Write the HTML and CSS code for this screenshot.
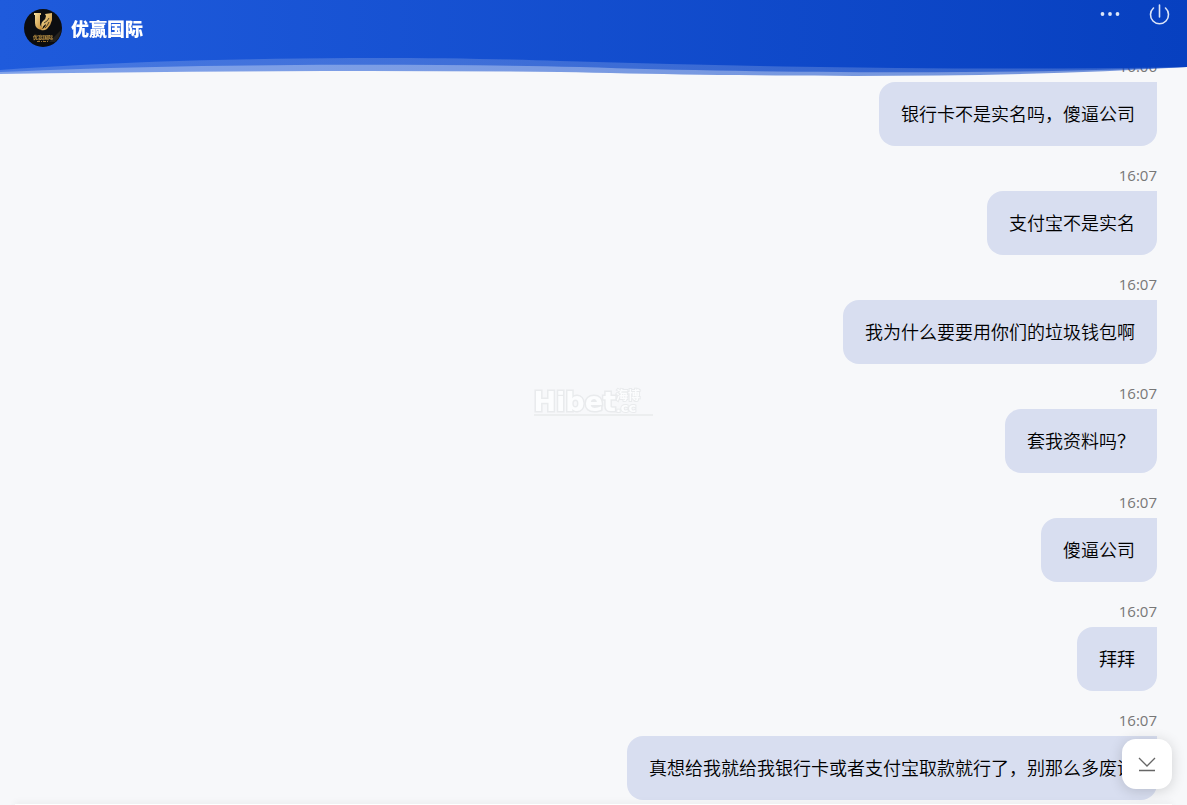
FILE: index.html
```
<!DOCTYPE html>
<html lang="zh-CN">
<head>
  <meta charset="utf-8">
  <title>优赢国际</title>
  <link rel="stylesheet" href="styles.css">
</head>
<body>
  <header class="header">
    <svg class="header-bg" viewBox="0 0 1187 80" preserveAspectRatio="none" aria-hidden="true">
      <defs>
        <linearGradient id="blue" x1="0" y1="0" x2="1" y2="0">
          <stop offset="0" stop-color="#1f5bdc"/>
          <stop offset="1" stop-color="#0740c0"/>
        </linearGradient>
      </defs>
      <path fill="url(#blue)" fill-opacity="0.55" d="M0 0V74C200 71 380 70 560 72C740 76 980 80 1187 67V0Z"/>
      <path fill="url(#blue)" fill-opacity="0.6" d="M0 0V72C180 64 400 63 580 67C760 73 1000 75 1187 67V0Z"/>
      <path fill="url(#blue)" d="M0 0V70C160 58 390 55 560 61C760 67 980 71 1187 67V0Z"/>
    </svg>
    <div class="brand">
      <svg class="logo" viewBox="0 0 38 38" aria-hidden="true">
        <defs>
          <linearGradient id="gold" x1="0" y1="0" x2="1" y2="1">
            <stop offset="0" stop-color="#f8e2a0"/>
            <stop offset="1" stop-color="#c1862f"/>
          </linearGradient>
        </defs>
        <circle cx="19" cy="19" r="19" fill="#0c0d10"/>
        <path fill="#24221f" d="M25 33L37 21A19 19 0 0 1 31 33Z"/>
        <path fill="url(#gold)" d="M10 4H17V6H16V14Q16 18 19 18L18 21Q11 20 11 14V6H10Z"/>
        <path fill="url(#gold)" d="M21 5L28 4V11Q27 16 23 20Q20 22 17 21Q22 18 22 15Q20 16 18 19Q16 15 19 12Q22 10 22 7Z"/>
        <path fill="none" stroke="#0c0d10" stroke-width="0.700" d="M20 14Q24 12 25 9M21 19Q24 16 25 13"/>
        <text class="logo-name" x="19" y="30" text-anchor="middle">优赢国际</text>
        <path stroke="#9b7331" stroke-width="1" stroke-dasharray="3 1 1 1" d="M13 32.500H25"/>
      </svg>
      <h1 class="title">优赢国际</h1>
    </div>
    <div class="actions">
      <button class="icon-btn" type="button" aria-label="更多">
        <svg width="22" height="22" viewBox="0 0 22 22" fill="#dce5f8">
          <circle cx="3.500" cy="11" r="1.900"/>
          <circle cx="11" cy="11" r="1.900"/>
          <circle cx="18.500" cy="11" r="1.900"/>
        </svg>
      </button>
      <button class="icon-btn" type="button" aria-label="退出">
        <svg width="22" height="22" viewBox="0 0 22 22" fill="none" stroke="#dce5f8" stroke-width="1.600" stroke-linecap="round">
          <path d="M5.500 5A9 9 0 1 0 17.500 5M11.500 2V14"/>
        </svg>
      </button>
    </div>
  </header>

  <main class="chat">
    <div class="message">
      <time class="time">16:06</time>
      <p class="bubble">银行卡不是实名吗，傻逼公司</p>
    </div>
    <div class="message">
      <time class="time">16:07</time>
      <p class="bubble">支付宝不是实名</p>
    </div>
    <div class="message">
      <time class="time">16:07</time>
      <p class="bubble">我为什么要要用你们的垃圾钱包啊</p>
    </div>
    <div class="message">
      <time class="time">16:07</time>
      <p class="bubble">套我资料吗？</p>
    </div>
    <div class="message">
      <time class="time">16:07</time>
      <p class="bubble">傻逼公司</p>
    </div>
    <div class="message">
      <time class="time">16:07</time>
      <p class="bubble">拜拜</p>
    </div>
    <div class="message">
      <time class="time">16:07</time>
      <p class="bubble">真想给我就给我银行卡或者支付宝取款就行了，别那么多废话</p>
    </div>
  </main>
  <div class="composer"></div>

  <div class="watermark">
    <span class="mark-name">Hibet</span>
    <span class="mark-side"><span class="mark-cn">海博</span><span class="mark-cc">.cc</span></span>
  </div>

  <button class="to-bottom" type="button" aria-label="回到底部">
    <svg width="18" height="16" viewBox="0 0 18 16" fill="none" stroke="#666" stroke-width="1.300">
      <path d="M1 2L9 10L17 2M1 14.500H17"/>
    </svg>
  </button>
</body>
</html>
```
FILE: styles.css
```
* {
  box-sizing: border-box;
  margin: 0;
  padding: 0;
}
body {
  display: flex;
  flex-direction: column;
  height: 100vh;
  overflow: hidden;
  background-color: #f7f8fa;
  font-family: "Open Sans", "Noto Sans CJK SC", sans-serif;
  font-size: 18px;
  color: #000;
}
button {
  border: none;
  background: none;
  cursor: pointer;
}
svg {
  display: block;
}

/* header floats over the scrolled messages */
.header {
  position: fixed;
  top: 0;
  left: 0;
  right: 0;
  z-index: 2;
  display: flex;
  justify-content: space-between;
  align-items: flex-start;
  height: 80px;
  padding: 0 17px 0 24px;
}
.header-bg {
  position: absolute;
  top: 0;
  left: 0;
  z-index: -1;
  width: 100%;
  height: 80px;
}
.brand {
  display: flex;
  align-items: center;
  gap: 9px;
  padding-top: 9px;
}
.logo {
  width: 38px;
  height: 38px;
}
.logo-name {
  fill: #c99b48;
  font-family: "Noto Sans CJK SC", sans-serif;
  font-size: 5px;
  font-weight: bold;
}
.title {
  color: #fff;
  font-family: "Noto Sans CJK SC", sans-serif;
  font-size: 18px;
  font-weight: 900;
  line-height: 38px;
}
.actions {
  display: flex;
  gap: 27px;
  padding-top: 3px;
}

.chat {
  flex: 1;
  display: flex;
  flex-direction: column;
  justify-content: flex-end;
  min-height: 0;
  padding: 0 30px 4px;
}
.message {
  display: flex;
  flex-direction: column;
  align-items: flex-end;
  flex-shrink: 0;
  padding-top: 17px;
}
.time {
  margin-bottom: 4px;
  color: #777;
  font-size: 15px;
  line-height: 24px;
}
.bubble {
  padding: 17px 22px 19px;
  border-radius: 16px 0 16px 16px;
  background-color: #d8def0;
  font-family: "Noto Sans CJK SC", sans-serif;
  font-weight: 350;
  line-height: 28px;
}
.composer {
  height: 1px;
  margin: 0 15px;
  background-color: #fff;
  box-shadow: 0 0 6px rgba(0, 0, 0, 0.25);
}

.watermark {
  position: fixed;
  top: 50%;
  left: 50%;
  display: flex;
  align-items: flex-end;
  width: 119px;
  height: 28px;
  margin: -15px 0 0 -60px;
  border-bottom: 2px solid #eceeef;
  color: #fcfdfe;
  font-family: "DejaVu Sans", sans-serif;
  font-weight: bold;
  paint-order: stroke fill;
  -webkit-text-stroke: 3px #e9ebed;
}
.mark-name {
  font-size: 27px;
  line-height: 24px;
}
.mark-side {
  display: flex;
  flex-direction: column;
  -webkit-text-stroke-width: 2px;
}
.mark-cn {
  font-family: "Noto Sans CJK SC", sans-serif;
  font-size: 12px;
  line-height: 14px;
}
.mark-cc {
  font-size: 13px;
  line-height: 12px;
}

.to-bottom {
  position: fixed;
  right: 15px;
  bottom: 16px;
  z-index: 1;
  display: flex;
  justify-content: center;
  align-items: center;
  width: 50px;
  height: 50px;
  border-radius: 14px;
  background-color: #fff;
  box-shadow: 0 2px 14px rgba(0, 0, 0, 0.16);
}
```
